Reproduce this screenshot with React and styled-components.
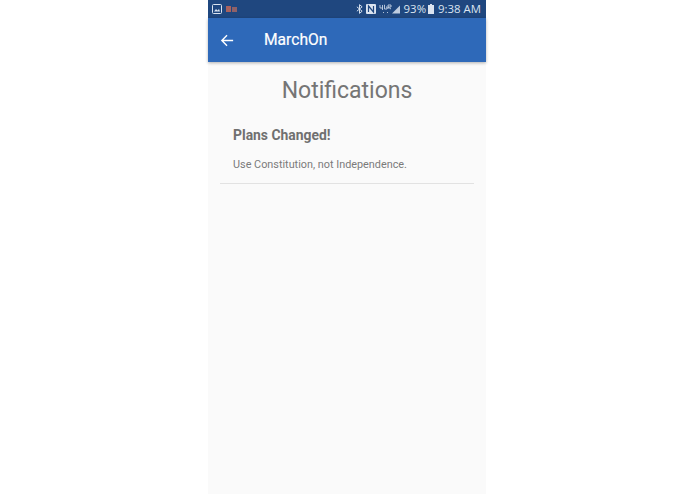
import React from 'react';
import styled, { createGlobalStyle } from 'styled-components';

const Global = createGlobalStyle`
  html, body { margin: 0; padding: 0; background: #fff; }
  #root { width: 695px; height: 494px; overflow: hidden; }
`;
const Page = styled.div`
  width: 695px; height: 494px; display: flex; padding-left: 208px; box-sizing: border-box; background: #fff;
  font-family: Roboto, "Liberation Sans", sans-serif;
`;
const Phone = styled.div`
  width: 278px; height: 494px; background: #fafafa; display: flex; flex-direction: column;
`;
const StatusBar = styled.div`
  height: 18px; background: #1f477f; display: flex; align-items: center; padding: 0 5px 0 4px; color: #dbe4f0; flex: none;
`;
const StatusLeft = styled.div`display: flex; align-items: center; gap: 4px;`;
const StatusRight = styled.div`margin-left: auto; display: flex; align-items: center; gap: 2px;`;
const StatusText = styled.span`
  font-family: "Open Sans", "Liberation Sans", sans-serif; font-size: ${p => p.$size}px; line-height: 18px;
  margin-left: ${p => p.$ml || 0}px;
`;
const AppBar = styled.div`
  height: 44px; background: #2e69b9; display: flex; align-items: center; color: #fff; flex: none;
  box-shadow: 0 1px 3px rgba(0,0,0,.3); padding-left: 11px;
`;
const Title = styled.div`font-size: 15.6px; font-weight: 400; margin-left: 29px; -webkit-text-stroke: .2px #fff;`;
const Heading = styled.h1`
  margin: 14px 0 0; font-size: 23px; line-height: 30px; font-weight: 400; color: #757575; text-align: center;
`;
const Item = styled.div`
  margin: 19px 12px 0; padding: 0 13px 10px; border-bottom: 1px solid #e2e2e2;
`;
const ItemTitle = styled.div`font-size: 13.9px; line-height: 20px; font-weight: 700; color: #707070;`;
const ItemBody = styled.div`font-size: 10.85px; line-height: 16px; color: #7a7a7a; margin-top: 12px;`;

export default function App() {
  return (
    <Page>
      <Global />
      <Phone>
        <StatusBar>
          <StatusLeft>
            <svg width="10" height="10" viewBox="0 0 10 10" fill="none">
              <rect x=".5" y=".5" width="9" height="9" rx="1" stroke="#dbe4f0" />
              <path d="M2 7.5 4 5l1.5 1.5L7 5l1 2.5z" fill="#dbe4f0" />
            </svg>
            <svg width="11" height="7" viewBox="0 0 11 7">
              <rect x="0" y="0" width="5" height="6" fill="#a8625f" />
              <rect x="6" y="1" width="5" height="5" fill="#8f6168" />
            </svg>
          </StatusLeft>
          <StatusRight>
            <svg width="7" height="10" viewBox="0 0 8 11" fill="none" stroke="#dbe4f0" strokeWidth="1.1">
              <path d="M1 3l6 5-3 2.5v-10L7 3 1 8" />
            </svg>
            <svg width="10" height="10" viewBox="0 0 10 10" style={{ marginLeft: 1 }}>
              <rect width="10" height="10" rx="1" fill="#dbe4f0" />
              <path d="M2.5 8V2l5 6V2" stroke="#1f477f" strokeWidth="1.2" fill="none" />
            </svg>
            <svg width="13" height="10" viewBox="0 0 13 10" fill="none" stroke="#c4d1e3" strokeWidth=".9" style={{ marginLeft: 1 }}>
              <path d="M1 1v3h3M3.5 1v5M6 1h-.5v4H8V3H7M9 5V1h3v2H9l3 2" />
              <path d="M4 8.5h1M8 8.5h1" />
            </svg>
            <svg width="8" height="9" viewBox="0 0 9 9" style={{ marginLeft: -2 }}>
              <path d="M0 9 9 0v9z" fill="#dbe4f0" opacity=".85" />
            </svg>
            <StatusText $size={11.4} $ml={2}>93%</StatusText>
            <svg width="6" height="10" viewBox="0 0 6 10">
              <path d="M2 0h2v1h2v9H0V1h2z" fill="#dbe4f0" />
            </svg>
            <StatusText $size={11.4} $ml={2}>9:38 AM</StatusText>
          </StatusRight>
        </StatusBar>
        <AppBar>
          <svg width="15" height="15" viewBox="0 0 16 16" fill="none" stroke="#fff" strokeWidth="1.5" style={{ marginLeft: 1 }}>
            <path d="M14 8H2.5M7.5 2.5 2 8l5.5 5.5" />
          </svg>
          <Title>MarchOn</Title>
        </AppBar>
        <Heading>Notifications</Heading>
        <Item>
          <ItemTitle>Plans Changed!</ItemTitle>
          <ItemBody>Use Constitution, not Independence.</ItemBody>
        </Item>
      </Phone>
    </Page>
  );
}
